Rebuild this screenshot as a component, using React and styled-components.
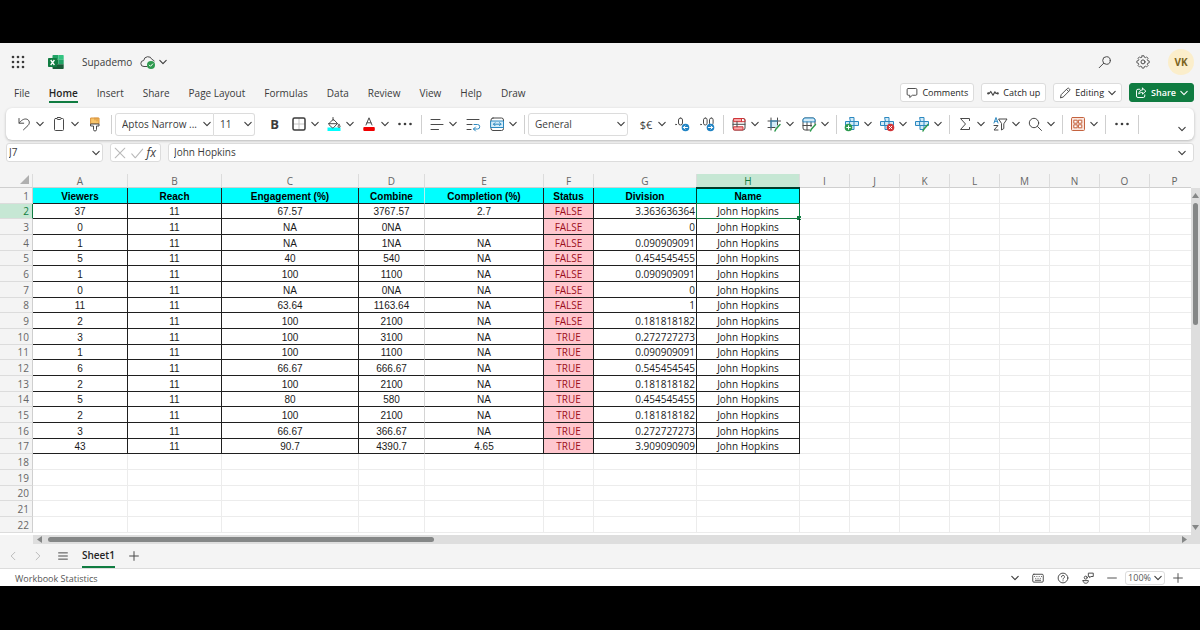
import React from 'react';
import styled, { createGlobalStyle, css } from 'styled-components';

const colors = {
  chrome: '#f4f4f4',
  white: '#ffffff',
  text: '#3b3b3b',
  muted: '#666666',
  icon: '#4a4a4a',
  faint: '#b8b8b8',
  line: '#dcdcdc',
  gridLine: '#ececec',
  cellLine: '#1f1f1f',
  green: '#107c41',
  greenTint: '#c6e7d4',
  cyan: '#00ffff',
  pink: '#ffc7ce',
  darkRed: '#9c0f1b',
  blue: '#2b88c0',
  red: '#d13438',
  track: '#dedede',
  thumb: '#858787',
};

const uiFont = "'Open Sans', 'Noto Sans', sans-serif";
const cellFont = "'Liberation Sans', Arial, sans-serif";

const GlobalStyle = createGlobalStyle`
  * {
    box-sizing: border-box;
  }

  body {
    margin: 0;
    background: #000;
    color: ${colors.text};
    font-family: ${uiFont};
    font-size: 10px;
  }

  button, input, select {
    margin: 0;
    padding: 0;
    border: 0;
    background: none;
    color: inherit;
    font: inherit;
  }
`;

const Screen = styled.div`
  display: flex;
  flex-direction: column;
  min-height: 100vh;
  padding: 43px 0 44px;
`;

const Window = styled.div`
  flex: 1;
  display: flex;
  flex-direction: column;
  background: ${colors.chrome};
  overflow: hidden;
`;

const Icon = styled.svg.attrs({ viewBox: '0 0 16 16', 'aria-hidden': true })`
  flex: none;
  width: ${props => props.$size || 16}px;
  height: ${props => props.$size || 16}px;
  fill: none;
  stroke: ${props => props.$color || colors.icon};
  stroke-width: ${props => props.$weight || 1};
  stroke-linecap: round;
  stroke-linejoin: round;
`;

const ChevronSvg = styled.svg.attrs({ viewBox: '0 0 8 8', 'aria-hidden': true })`
  flex: none;
  width: 8px;
  height: 8px;
  fill: none;
  stroke: ${props => props.$color || colors.text};
  stroke-width: 1.1;
  stroke-linecap: round;
  stroke-linejoin: round;
`;

function Chevron({ color }) {
  return (
    <ChevronSvg $color={color}>
      <path d="M.8 2.4 4 5.6l3.2-3.2" />
    </ChevronSvg>
  );
}

// ---- title bar ----

const TitleBar = styled.header`
  display: flex;
  align-items: center;
  height: 38px;
  padding: 0 6px 0 10px;
`;

const PlainButton = styled.button`
  display: flex;
  align-items: center;
  justify-content: center;
  gap: 3px;
`;

const HeaderButton = styled(PlainButton)`
  width: 26px;
`;

const Logo = styled.svg`
  width: 16px;
  height: 16px;
  margin-left: 22px;
`;

const FileName = styled.h1`
  margin: 0 8px 0 18px;
  font-size: 10px;
  font-weight: 400;
  line-height: 16px;
`;

const TitleActions = styled.div`
  display: flex;
  align-items: center;
  gap: 12px;
  margin-left: auto;
`;

const Avatar = styled.button`
  width: 26px;
  height: 26px;
  border-radius: 50%;
  background: #fbeecb;
  color: #7c6420;
  font-size: 10px;
  font-weight: 700;
`;

// ---- tabs ----

const TabBar = styled.div`
  display: flex;
  align-items: flex-start;
  height: 27px;
  padding: 2px 6px 0 14px;
`;

const Tabs = styled.nav`
  display: flex;
  gap: 19px;
`;

const Tab = styled.a`
  padding-top: 2px;
  color: ${colors.text};
  line-height: 16px;
  text-decoration: none;
  white-space: nowrap;

  ${props =>
    props.$active &&
    css`
      border-bottom: 2px solid ${colors.green};
      color: #242424;
      font-weight: 600;
    `}
`;

const TabActions = styled.div`
  display: flex;
  gap: 7px;
  margin-left: auto;
`;

const ActionButton = styled.button`
  display: flex;
  align-items: center;
  gap: 4px;
  height: 19px;
  padding: 0 5px;
  border: 1px solid ${props => (props.$primary ? colors.green : colors.line)};
  border-radius: 3px;
  background: ${props => (props.$primary ? colors.green : colors.white)};
  color: ${props => (props.$primary ? colors.white : '#242424')};
  font-size: 9px;
  font-weight: ${props => (props.$primary ? 600 : 400)};
  white-space: nowrap;
`;

// ---- ribbon ----

const Ribbon = styled.div`
  display: flex;
  align-items: center;
  height: 32px;
  margin: 0 6px;
  padding: 0 8px 0 3px;
  border-radius: 6px;
  background: ${colors.white};
  box-shadow: 0 1px 3px rgba(0, 0, 0, 0.25);
`;

const Group = styled.div`
  display: flex;
  align-items: center;
  height: 19px;
  padding: 0 4px 0 3px;
  border-right: 1px solid #cfcfcf;
`;

const Tool = styled.button`
  display: flex;
  align-items: center;
  justify-content: center;
  width: 25px;
  height: 24px;
`;

const SplitTool = styled.button`
  display: flex;
  align-items: center;
  gap: 4px;
  width: 35px;
  height: 24px;
  padding: 0 3px 0 4px;
`;

const BoldMark = styled.b`
  font-size: 13px;
`;

const CurrencyMark = styled.span`
  width: 16px;
  font-size: 11px;
`;

const RibbonToggle = styled.button`
  display: flex;
  align-self: flex-end;
  margin-left: auto;
  padding-bottom: 7px;
`;

const SelectBox = styled.div`
  display: grid;
  align-items: center;
  width: ${props => props.$width}px;
  height: 23px;
  border: 1px solid ${colors.line};
  border-radius: ${props => props.$radius || '3px'};

  & + & {
    border-left: 0;
  }

  & > * {
    grid-area: 1 / 1;
  }

  svg {
    justify-self: end;
    margin-right: 2px;
    pointer-events: none;
  }
`;

const Select = styled.select`
  width: 100%;
  padding-left: 6px;
  appearance: none;
  line-height: 16px;
`;

const FontBoxes = styled.div`
  display: flex;
  margin-right: 7px;
`;

const FormatBox = styled.div`
  margin-right: 6px;
`;

// ---- formula bar ----

const FormulaBar = styled.div`
  display: flex;
  gap: 7px;
  padding: 3px 6px 0;
`;

const BarBox = styled.div`
  display: flex;
  align-items: center;
  height: 19px;
  border: 1px solid ${colors.line};
  border-radius: 3px;
  background: ${colors.white};
`;

const NameBox = styled(BarBox)`
  width: 97px;
  padding: 0 2px;
`;

const FxBox = styled(BarBox)`
  justify-content: space-between;
  width: 51px;
  padding: 0 2px;
`;

const FormulaBox = styled(BarBox)`
  flex: 1;
  padding: 0 7px 0 5px;
`;

const BarInput = styled.input`
  flex: 1;
  min-width: 0;
  padding-bottom: 2px;
  line-height: 14px;
`;

const FxMark = styled.i`
  padding-right: 2px;
  font-size: 12px;
  line-height: 14px;
`;

// ---- sheet ----

const SheetArea = styled.main`
  flex: 1;
  display: grid;
  grid-template-columns: 1fr 9px;
  grid-template-rows: 1fr 9px;
  min-height: 0;
  margin-top: 12px;
`;

const SheetView = styled.div`
  overflow: hidden;
  background: linear-gradient(${colors.chrome} 14px, ${colors.white} 14px);
`;

const Sheet = styled.table`
  table-layout: fixed;
  width: min-content;
  border-spacing: 0;
`;

const Col = styled.col`
  width: ${props => props.$width}px;
`;

const ColHeader = styled.th`
  height: 14px;
  padding: 1px 0 0;
  border-right: 1px solid ${colors.line};
  border-bottom: 1px solid #cfcfcf;
  background: ${props => (props.$active ? colors.greenTint : colors.chrome)};
  color: ${props => (props.$active ? colors.green : colors.muted)};
  font-weight: 400;
  line-height: 12px;
`;

const Corner = styled.td`
  padding: 0 3px 2px 0;
  border-right: 1px solid ${colors.line};
  border-bottom: 1px solid #cfcfcf;
  background: ${colors.chrome};

  svg {
    display: block;
    width: 9px;
    height: 9px;
    margin-left: auto;
    fill: #b0b0b0;
  }
`;

// rows are 16px high, every third one is 15px
const Row = styled.tr`
  height: 16px;

  &:nth-child(3n + 2) {
    height: 15px;
  }
`;

const RowHeader = styled.th`
  padding: 1px 3px 0 0;
  border-right: 1px solid ${props => (props.$active ? colors.green : '#cfcfcf')};
  border-bottom: 1px solid ${colors.line};
  background: ${props => (props.$active ? colors.greenTint : colors.chrome)};
  color: ${props => (props.$active ? colors.green : colors.muted)};
  font-weight: 400;
  line-height: 13px;
  text-align: right;
`;

const Cell = styled.td`
  position: relative;
  padding: ${props => (props.$sans ? 0 : '2px')} 1px 0;
  border-right: 1px solid ${colors.gridLine};
  border-bottom: 1px solid ${colors.gridLine};
  color: #1a1a1a;
  font-family: ${props => (props.$sans ? uiFont : cellFont)};
  line-height: ${props => (props.$sans ? 14 : 12)}px;
  text-align: ${props => props.$align || 'center'};
  white-space: nowrap;

  ${props =>
    props.$filled &&
    css`
      border-bottom-color: ${colors.cellLine};
      border-right-color: ${props.$openRight ? '#d4d4d4' : colors.cellLine};
    `}

  ${props =>
    props.$status &&
    css`
      background: ${colors.pink};
      color: ${colors.darkRed};
    `}

  ${props =>
    props.$title &&
    css`
      border-right-color: ${props.$openRight ? '#b4f0f0' : colors.cellLine};
      background: ${colors.cyan};
      color: #000;
      font-weight: 700;
    `}
`;

const Selection = styled.span`
  position: absolute;
  inset: -1px;
  border: 1px solid ${colors.green};

  &::after {
    content: '';
    position: absolute;
    right: -2px;
    bottom: -2px;
    width: 4px;
    height: 4px;
    background: ${colors.green};
  }
`;

const TitleOutline = styled.span`
  position: absolute;
  inset: -1px;
  border: 1px solid #003b2a;
  border-top-width: 2px;
`;

const ScrollTrack = styled.div`
  display: flex;
  flex-direction: ${props => (props.$vertical ? 'column' : 'row')};
  align-items: center;
  gap: ${props => (props.$vertical ? 4 : 5)}px;
  margin: ${props => (props.$vertical ? '14px 0 0' : '0 0 0 33px')};
  padding: ${props => (props.$vertical ? '4px 0' : '0 3px 0 3px')};
  background: ${colors.track};

  svg {
    flex: none;
    width: 7px;
    height: 7px;
    fill: ${colors.thumb};
  }

  svg:last-child {
    margin-top: ${props => (props.$vertical ? 'auto' : 0)};
    margin-left: ${props => (props.$vertical ? 0 : 'auto')};
  }
`;

const Thumb = styled.div`
  flex: 0 0 ${props => props.$length};
  width: ${props => (props.$vertical ? '5px' : 'auto')};
  height: ${props => (props.$vertical ? 'auto' : '5px')};
  border-radius: 3px;
  background: ${colors.thumb};
`;

const TrackCorner = styled.div`
  background: ${colors.track};
`;

// ---- footer ----

const SheetBar = styled.div`
  display: flex;
  align-items: center;
  gap: 14px;
  height: 25px;
  padding: 0 8px;
  border-bottom: 1px solid ${colors.line};
`;

const SheetNav = styled.div`
  display: flex;
  gap: 15px;
`;

const SheetTab = styled.button`
  align-self: stretch;
  border-bottom: 2px solid ${colors.green};
  color: #242424;
  font-weight: 600;
`;

const StatusBar = styled.footer`
  display: flex;
  align-items: center;
  height: 17px;
  padding: 1px 17px 0 15px;
  background: ${colors.white};
  color: #555;
  font-size: 9px;
`;

const StatusTools = styled.div`
  display: flex;
  align-items: center;
  gap: 13px;
  margin-left: auto;
`;

const ZoomTools = styled.div`
  display: flex;
  align-items: center;
  gap: 8px;
`;

const ZoomButton = styled.button`
  display: flex;
  align-items: center;
  gap: 3px;
  height: 14px;
  padding: 0 2px;
  border: 1px solid ${colors.line};
  border-radius: 3px;
  line-height: 12px;
`;

const tabs = ['File', 'Home', 'Insert', 'Share', 'Page Layout', 'Formulas', 'Data', 'Review', 'View', 'Help', 'Draw'];

const columns = [
  { name: 'A', width: 95 },
  { name: 'B', width: 94 },
  { name: 'C', width: 137 },
  { name: 'D', width: 66 },
  { name: 'E', width: 119 },
  { name: 'F', width: 50 },
  { name: 'G', width: 103 },
  { name: 'H', width: 103 },
  ...['I', 'J', 'K', 'L', 'M', 'N', 'O', 'P'].map(name => ({ name, width: 50 })),
];

const titles = ['Viewers', 'Reach', 'Engagement (%)', 'Combine', 'Completion (%)', 'Status', 'Division', 'Name'];

const person = 'John Hopkins';

const records = [
  ['37', '11', '67.57', '3767.57', '2.7', 'FALSE', '3.363636364', person],
  ['0', '11', 'NA', '0NA', '', 'FALSE', '0', person],
  ['1', '11', 'NA', '1NA', 'NA', 'FALSE', '0.090909091', person],
  ['5', '11', '40', '540', 'NA', 'FALSE', '0.454545455', person],
  ['1', '11', '100', '1100', 'NA', 'FALSE', '0.090909091', person],
  ['0', '11', 'NA', '0NA', 'NA', 'FALSE', '0', person],
  ['11', '11', '63.64', '1163.64', 'NA', 'FALSE', '1', person],
  ['2', '11', '100', '2100', 'NA', 'FALSE', '0.181818182', person],
  ['3', '11', '100', '3100', 'NA', 'TRUE', '0.272727273', person],
  ['1', '11', '100', '1100', 'NA', 'TRUE', '0.090909091', person],
  ['6', '11', '66.67', '666.67', 'NA', 'TRUE', '0.545454545', person],
  ['2', '11', '100', '2100', 'NA', 'TRUE', '0.181818182', person],
  ['5', '11', '80', '580', 'NA', 'TRUE', '0.454545455', person],
  ['2', '11', '100', '2100', 'NA', 'TRUE', '0.181818182', person],
  ['3', '11', '66.67', '366.67', 'NA', 'TRUE', '0.272727273', person],
  ['43', '11', '90.7', '4390.7', '4.65', 'TRUE', '3.909090909', person],
];

const rows = [titles, ...records, [], [], [], [], []];

function Split({ label, children }) {
  return (
    <SplitTool aria-label={label}>
      {children}
      <Chevron />
    </SplitTool>
  );
}

function Dots() {
  return (
    <Icon>
      <g fill={colors.text} stroke="none">
        <circle cx="2.5" cy="8" r="1.3" />
        <circle cx="8" cy="8" r="1.3" />
        <circle cx="13.5" cy="8" r="1.3" />
      </g>
    </Icon>
  );
}

// blue cross made of cells, shared by insert / delete / format
function CellCross() {
  return (
    <>
      <path d="M6 1.5h4v4h4.5v4H10v4H6v-4H1.5v-4H6z" fill="#d3ebf8" stroke={colors.blue} />
      <path d="M6 5.5h4v4H6z" stroke={colors.blue} />
    </>
  );
}

function Title() {
  return (
    <TitleBar>
      <PlainButton aria-label="App launcher">
        <Icon>
          <g fill={colors.text} stroke="none">
            {[3, 8, 13].map(y => [3, 8, 13].map(x => <circle key={`${x}-${y}`} cx={x} cy={y} r="1.3" />))}
          </g>
        </Icon>
      </PlainButton>
      <Logo viewBox="0 0 16 16" aria-hidden="true">
        <path d="M5.2 1h5.3v4.7h-6v-4a.7.7 0 0 1 .7-.7z" fill="#21a366" />
        <path d="M10.5 1H15a.7.7 0 0 1 .7.7v4h-5.2z" fill="#33c481" />
        <path d="M4.5 5.7h6v4.6h-6z" fill="#107c41" />
        <path d="M10.5 5.7h5.2v4.6h-5.2z" fill="#21a366" />
        <path d="M4.5 10.3h11.2v4a.7.7 0 0 1-.7.7H5.2a.7.7 0 0 1-.7-.7z" fill="#185c37" />
        <rect x="0" y="4" width="9" height="9" rx=".8" fill="#107c41" />
        <path d="m2.7 6 3.7 5M6.4 6l-3.7 5" stroke="#fff" strokeWidth="1.3" fill="none" />
      </Logo>
      <FileName>Supademo</FileName>
      <PlainButton aria-label="Saved to cloud">
        <Icon>
          <path d="M7 12.5H4a3 3 0 0 1-.3-6A4.3 4.3 0 0 1 12 5.5a3 3 0 0 1 2.2 1.5" />
          <circle cx="11" cy="11" r="4" fill="#2e9a4f" stroke="none" />
          <path d="m9.300 11.100 1.200 1.200 2.200-2.400" stroke="#fff" />
        </Icon>
        <Chevron />
      </PlainButton>
      <TitleActions>
        <HeaderButton aria-label="Search">
          <Icon>
            <circle cx="9.5" cy="6.5" r="3.8" />
            <path d="m6.6 9.3-4.4 4.4" />
          </Icon>
        </HeaderButton>
        <HeaderButton aria-label="Settings">
          <Icon>
            <path
              d="M6.900 2h2.200l.4 1.700 1.100.5 1.500-.9 1.600 1.600-.9 1.500.5 1.100 1.700.4v2.200l-1.700.4-.5 1.100.9 1.500-1.600 1.600-1.500-.9-1.100.5-.4 1.700H6.900l-.4-1.700-1.100-.5-1.500.9-1.600-1.600.9-1.500-.5-1.100L1 10.100V7.900l1.700-.4.5-1.100-.9-1.500 1.600-1.600 1.500.9 1.100-.5z"
              transform="translate(1 0) scale(.88)"
            />
            <circle cx="8" cy="7.9" r="2" />
          </Icon>
        </HeaderButton>
        <Avatar aria-label="Account">VK</Avatar>
      </TitleActions>
    </TitleBar>
  );
}

function Menu() {
  return (
    <TabBar>
      <Tabs>
        {tabs.map(tab => (
          <Tab key={tab} href="#" $active={tab === 'Home'}>
            {tab}
          </Tab>
        ))}
      </Tabs>
      <TabActions>
        <ActionButton>
          <Icon $size={12} $weight={1.3}>
            <path d="M3 2h10a1.5 1.5 0 0 1 1.5 1.5v6A1.5 1.5 0 0 1 13 11H8.5L5 14v-3H3a1.5 1.5 0 0 1-1.5-1.5v-6A1.5 1.5 0 0 1 3 2z" />
          </Icon>
          Comments
        </ActionButton>
        <ActionButton>
          <Icon $size={12} $weight={1.6}>
            <path d="M1.5 8.5H3L5 6l3 5 2.5-4.5 1.5 2h2" />
            <circle cx="1.7" cy="8.5" r=".7" />
            <circle cx="14.3" cy="8.5" r=".7" />
          </Icon>
          Catch up
        </ActionButton>
        <ActionButton>
          <Icon $size={12} $weight={1.3}>
            <path d="m2 14 .9-3.8 8.2-8.2a1.6 1.6 0 0 1 2.3 0l.6.6a1.6 1.6 0 0 1 0 2.3l-8.2 8.200zM10 3.200 12.800 6" />
          </Icon>
          Editing
          <Chevron />
        </ActionButton>
        <ActionButton $primary>
          <Icon $size={12} $weight={1.3} $color={colors.white}>
            <path d="M6.5 3H4a2 2 0 0 0-2 2v7a2 2 0 0 0 2 2h7a2 2 0 0 0 2-2v-1.5" />
            <path d="M10 1.5 14.5 5.5 10 9.5V7.3c-2.5 0-4 .7-5 2.2.2-3 2-5.5 5-5.800z" />
          </Icon>
          Share
          <Chevron color={colors.white} />
        </ActionButton>
      </TabActions>
    </TabBar>
  );
}

function Toolbar() {
  return (
    <Ribbon role="toolbar" aria-label="Home">
      <Group>
        <Split label="Undo">
          <Icon>
            <path d="M3 2.5v4.7h4.7" />
            <path d="M3.2 7C5 4.5 8 2.3 10.8 3.2c3 1 3.2 4.3 1.2 6.3L7.5 13.8" />
          </Icon>
        </Split>
        <Split label="Paste">
          <Icon>
            <rect x="3.5" y="2.5" width="9" height="12" rx="1" />
            <rect x="6" y="1.5" width="4" height="2" rx=".7" fill="#fff" />
          </Icon>
        </Split>
        <Tool aria-label="Format painter">
          <Icon>
            <path d="M4 2h8v6H4z" fill="#f9c66b" stroke="#d9923a" />
            <path d="M8 2v2M10 2v3" stroke="#d9923a" />
            <path d="M4 8h8v2H9.5v3.5a1 1 0 0 1-3 0V10H4z" fill="#fff" />
          </Icon>
        </Tool>
      </Group>
      <Group>
        <FontBoxes>
          <SelectBox $width={99} $radius="3px 0 0 3px">
            <Select aria-label="Font">
              <option>Aptos Narrow ...</option>
            </Select>
            <Chevron />
          </SelectBox>
          <SelectBox $width={41} $radius="0 3px 3px 0">
            <Select aria-label="Font size">
              <option>11</option>
            </Select>
            <Chevron />
          </SelectBox>
        </FontBoxes>
        <Tool aria-label="Bold">
          <BoldMark>B</BoldMark>
        </Tool>
        <Split label="Borders">
          <Icon>
            <path d="M8 2.5v11M2.5 8h11" stroke="#c4c4c4" />
            <rect x="2" y="2" width="12" height="12" rx="1.5" strokeWidth="1.5" stroke={colors.text} />
          </Icon>
        </Split>
        <Split label="Fill color">
          <Icon>
            <path d="M1.5 11.5h13V15h-13z" fill={colors.cyan} stroke="none" />
            <path d="M7 1.5v3M3 7.5l4.3-4.3 4.200 4.300-4 4.200a1 1 0 0 1-1.300 0L3 8.700a1 1 0 0 1 0-1.200zM3 7.700h8.300" />
            <path d="M13 8.500c1 1.300 1.300 2 .9 2.600-.4.500-1.300.5-1.700 0-.4-.6 0-1.500.8-2.600z" fill="#fff" />
          </Icon>
        </Split>
        <Split label="Font color">
          <Icon>
            <path d="M5 9 8 1.800 11 9M6 6.800h4" />
            <rect x="2.3" y="11" width="11.5" height="4" rx="1" fill="#f00000" stroke="none" />
          </Icon>
        </Split>
        <Tool aria-label="More font options">
          <Dots />
        </Tool>
      </Group>
      <Group>
        <Split label="Align">
          <Icon>
            <path d="M2 3.5h9M2 8.5h12M2 13.5h7.5" />
          </Icon>
        </Split>
        <Tool aria-label="Wrap text">
          <Icon>
            <path d="M2 3.5h12M2 8.5h5M2 13.5h4" />
            <path d="M9 8.5h3.5a2 2 0 0 1 0 4.500H8.500M10.500 11l-2 2 2 2" stroke={colors.blue} />
          </Icon>
        </Tool>
        <Split label="Merge">
          <Icon>
            <rect x="2" y="2" width="12.5" height="12.5" rx="2" />
            <path d="M2 5h12.5v6.5H2z" fill="#d3ebf8" stroke={colors.blue} />
            <path d="M4.5 8.2H12M6 6.7 4.5 8.2 6 9.7M10.5 6.7 12 8.2l-1.5 1.5" stroke={colors.blue} />
          </Icon>
        </Split>
      </Group>
      <Group>
        <FormatBox>
          <SelectBox $width={100}>
            <Select aria-label="Number format">
              <option>General</option>
            </Select>
            <Chevron />
          </SelectBox>
        </FormatBox>
        <Split label="Currency">
          <CurrencyMark>$€</CurrencyMark>
        </Split>
        <Tool aria-label="Decrease decimal">
          <Icon>
            <circle cx="2" cy="8.5" r=".4" />
            <rect x="4.5" y="2" width="4" height="7" rx="2" />
            <circle cx="11.5" cy="11.5" r="3.8" fill="#1f83c4" stroke="none" />
            <path d="M13.5 11.5h-4M11 9.9l-1.6 1.6 1.6 1.6" stroke="#fff" />
          </Icon>
        </Tool>
        <Tool aria-label="Increase decimal">
          <Icon>
            <circle cx="2" cy="8.5" r=".4" />
            <rect x="4.5" y="2" width="3.6" height="7" rx="1.8" />
            <rect x="10.5" y="2" width="3.6" height="7" rx="1.8" />
            <circle cx="11.5" cy="11.5" r="3.8" fill="#1f83c4" stroke="none" />
            <path d="M9.5 11.5h4M12 9.9l1.6 1.6-1.6 1.6" stroke="#fff" />
          </Icon>
        </Tool>
      </Group>
      <Group>
        <Split label="Conditional formatting">
          <Icon>
            <rect x="2" y="2.5" width="12" height="11.5" rx="2" />
            <path d="M3 2.5h7.5v3.2H3zM3 10.8h9V14H3z" fill="#f7a8aa" stroke={colors.red} />
            <path d="M6 5.7v5M2 8.3h12" />
            <path d="M10.5 2.5h2A1.5 1.5 0 0 1 14 4v1.7h-3.5" stroke={colors.red} />
          </Icon>
        </Split>
        <Split label="Styles">
          <Icon>
            <path d="M5 5h6.5v6.5H5z" fill="#d3ebf8" stroke="none" />
            <path d="M5 2v12M11.5 2v7M2 5h12.5M2 11.5h7" />
            <path d="M5 5h6.5M5 5v6.5" stroke={colors.blue} />
            <path d="m14 8.5-4.200 4.700L9 15" stroke="#2e9a4f" strokeWidth="1.5" />
          </Icon>
        </Split>
        <Split label="Format as table">
          <Icon>
            <path d="M8.5 14H4a2 2 0 0 1-2-2V4a2 2 0 0 1 2-2h8a2 2 0 0 1 2 2v4M2 9.5h8.5M6 5.5V14M10 5.5v5" />
            <path d="M2 5.5V4a2 2 0 0 1 2-2h8a2 2 0 0 1 2 2v1.5z" fill="#d3ebf8" stroke={colors.blue} />
            <path d="m14.5 8.5-4.200 4.700-.8 1.800" stroke="#2e9a4f" strokeWidth="1.5" />
          </Icon>
        </Split>
      </Group>
      <Group>
        <Split label="Insert cells">
          <Icon>
            <CellCross />
            <circle cx="4.5" cy="11.5" r="3.8" fill="#2e9a4f" stroke="none" />
            <path d="M2.7 11.5h3.6M4.5 9.7v3.6" stroke="#fff" />
          </Icon>
        </Split>
        <Split label="Delete cells">
          <Icon>
            <CellCross />
            <circle cx="11.5" cy="11.5" r="3.8" fill={colors.red} stroke="none" />
            <path d="m10.2 10.2 2.6 2.6M12.8 10.2l-2.6 2.6" stroke="#fff" />
          </Icon>
        </Split>
        <Split label="Format cells">
          <Icon>
            <CellCross />
            <path d="m14 8.5-4.200 4.700L9 15" stroke="#2e9a4f" strokeWidth="1.5" />
          </Icon>
        </Split>
      </Group>
      <Group>
        <Split label="AutoSum">
          <Icon>
            <path d="M12.5 4.5v-2h-9L8.5 8l-5 5.5h9v-2" />
          </Icon>
        </Split>
        <Split label="Sort and filter">
          <Icon>
            <path d="m2 7 2-5.5L6 7M2.700 5.300h2.600" stroke={colors.blue} />
            <path d="M2 9.5h4L2 14h4" />
            <path d="M7 3h8l-3.2 4.8v4.7L9.5 14V7.800z" />
          </Icon>
        </Split>
        <Split label="Find">
          <Icon>
            <circle cx="7" cy="7" r="4.7" />
            <path d="m10.5 10.5 4 4" />
          </Icon>
        </Split>
      </Group>
      <Group>
        <Split label="Add-ins">
          <Icon $color="#c4633f">
            <rect x="1.5" y="1.5" width="13" height="13" rx="1" fill="#fbe5dc" />
            <path d="M4.2 4.2h3v3h-3zM8.8 4.2h3v3h-3zM4.2 8.8h3v3h-3zM8.8 8.8h3v3h-3z" fill="#fff" />
          </Icon>
        </Split>
      </Group>
      <Group>
        <Tool aria-label="More commands">
          <Dots />
        </Tool>
      </Group>
      <RibbonToggle aria-label="Ribbon display options">
        <Chevron />
      </RibbonToggle>
    </Ribbon>
  );
}

function Formula() {
  return (
    <FormulaBar>
      <NameBox>
        <BarInput aria-label="Name box" defaultValue="J7" />
        <PlainButton aria-label="Show names">
          <Chevron />
        </PlainButton>
      </NameBox>
      <FxBox>
        <PlainButton aria-label="Cancel">
          <Icon $size={14} $color={colors.faint} $weight={1.2}>
            <path d="m2.5 2.5 11 11M13.5 2.5l-11 11" />
          </Icon>
        </PlainButton>
        <PlainButton aria-label="Enter">
          <Icon $size={14} $color={colors.faint} $weight={1.2}>
            <path d="m2 9 4 4.5 8.5-10" />
          </Icon>
        </PlainButton>
        <PlainButton aria-label="Insert function">
          <FxMark>fx</FxMark>
        </PlainButton>
      </FxBox>
      <FormulaBox>
        <BarInput aria-label="Formula" defaultValue={person} />
        <PlainButton aria-label="Expand formula bar">
          <Chevron />
        </PlainButton>
      </FormulaBox>
    </FormulaBar>
  );
}

function SheetCell({ rowIndex, colIndex, value }) {
  const filled = rowIndex < 17 && colIndex < titles.length;
  const isTitle = rowIndex === 0 && filled;

  return (
    <Cell
      $filled={filled}
      $title={isTitle}
      $openRight={colIndex === 3}
      $status={filled && !isTitle && colIndex === 5}
      $sans={!isTitle && colIndex > 4}
      $align={!isTitle && colIndex === 6 ? 'right' : 'center'}
    >
      {value}
      {isTitle && colIndex === 7 && <TitleOutline />}
      {rowIndex === 1 && colIndex === 7 && <Selection />}
    </Cell>
  );
}

function Spreadsheet() {
  return (
    <SheetArea>
      <SheetView>
        <Sheet>
          <colgroup>
            <Col $width={33} />
            {columns.map(column => (
              <Col key={column.name} $width={column.width} />
            ))}
          </colgroup>
          <thead>
            <tr>
              <Corner>
                <svg viewBox="0 0 9 9" aria-hidden="true">
                  <path d="M9 0v9H0z" />
                </svg>
              </Corner>
              {columns.map(column => (
                <ColHeader key={column.name} scope="col" $active={column.name === 'H'}>
                  {column.name}
                </ColHeader>
              ))}
            </tr>
          </thead>
          <tbody>
            {rows.map((row, rowIndex) => (
              <Row key={rowIndex}>
                <RowHeader scope="row" $active={rowIndex === 1}>
                  {rowIndex + 1}
                </RowHeader>
                {columns.map((column, colIndex) => (
                  <SheetCell key={column.name} rowIndex={rowIndex} colIndex={colIndex} value={row[colIndex]} />
                ))}
              </Row>
            ))}
          </tbody>
        </Sheet>
      </SheetView>
      <ScrollTrack $vertical>
        <svg viewBox="0 0 7 7" aria-hidden="true">
          <path d="M3.5 1 7 6H0z" />
        </svg>
        <Thumb $vertical $length="36%" />
        <svg viewBox="0 0 7 7" aria-hidden="true">
          <path d="M3.5 6 7 1H0z" />
        </svg>
      </ScrollTrack>
      <ScrollTrack>
        <svg viewBox="0 0 7 7" aria-hidden="true">
          <path d="M1 3.5 6 0v7z" />
        </svg>
        <Thumb $length="33.5%" />
        <svg viewBox="0 0 7 7" aria-hidden="true">
          <path d="M6 3.5 1 0v7z" />
        </svg>
      </ScrollTrack>
      <TrackCorner />
    </SheetArea>
  );
}

function Footer() {
  return (
    <>
      <SheetBar>
        <SheetNav>
          <PlainButton aria-label="Previous sheet">
            <Icon $size={10} $color={colors.faint} $weight={1.5}>
              <path d="M11 2 5 8l6 6" />
            </Icon>
          </PlainButton>
          <PlainButton aria-label="Next sheet">
            <Icon $size={10} $color={colors.faint} $weight={1.5}>
              <path d="m5 2 6 6-6 6" />
            </Icon>
          </PlainButton>
          <PlainButton aria-label="All sheets">
            <Icon $size={10} $weight={1.6}>
              <path d="M1 3h14M1 8h14M1 13h14" />
            </Icon>
          </PlainButton>
        </SheetNav>
        <SheetTab>Sheet1</SheetTab>
        <PlainButton aria-label="New sheet">
          <Icon $size={10} $weight={1.6}>
            <path d="M8 1v14M1 8h14" />
          </Icon>
        </PlainButton>
      </SheetBar>
      <StatusBar>
        Workbook Statistics
        <StatusTools>
          <PlainButton aria-label="Status options">
            <Chevron />
          </PlainButton>
          <PlainButton aria-label="Keyboard">
            <Icon $size={12} $weight={1.3}>
              <rect x="1" y="3" width="14" height="10.5" rx="1.5" />
              <path d="M3.5 6h.1M6.5 6h.1M9.5 6h.1M12.5 6h.1M5 8.5h.1M8 8.5h.1M11 8.5h.1M4.5 11h7" />
            </Icon>
          </PlainButton>
          <PlainButton aria-label="Help">
            <Icon $size={12} $weight={1.3}>
              <circle cx="8" cy="8" r="6.5" />
              <path d="M6 6.5a2 2 0 1 1 2.8 1.8c-.6.3-.8.6-.8 1.2M8 11.7v.1" />
            </Icon>
          </PlainButton>
          <PlainButton aria-label="Feedback">
            <Icon $size={12} $weight={1.3}>
              <circle cx="5" cy="7.5" r="2" />
              <path d="M1.5 11.5h7C8.5 14 7 15 5 15s-3.500-1-3.500-3.500zM9 1.500h6V6h-3l-2 1.500V6H9z" />
            </Icon>
          </PlainButton>
          <ZoomTools>
            <PlainButton aria-label="Zoom out">
              <Icon $size={10} $weight={1.5}>
                <path d="M1 8h14" />
              </Icon>
            </PlainButton>
            <ZoomButton>
              100%
              <Chevron />
            </ZoomButton>
            <PlainButton aria-label="Zoom in">
              <Icon $size={10} $weight={1.5}>
                <path d="M8 1v14M1 8h14" />
              </Icon>
            </PlainButton>
          </ZoomTools>
        </StatusTools>
      </StatusBar>
    </>
  );
}

export default function App() {
  return (
    <Screen>
      <GlobalStyle />
      <Window>
        <Title />
        <Menu />
        <Toolbar />
        <Formula />
        <Spreadsheet />
        <Footer />
      </Window>
    </Screen>
  );
}
